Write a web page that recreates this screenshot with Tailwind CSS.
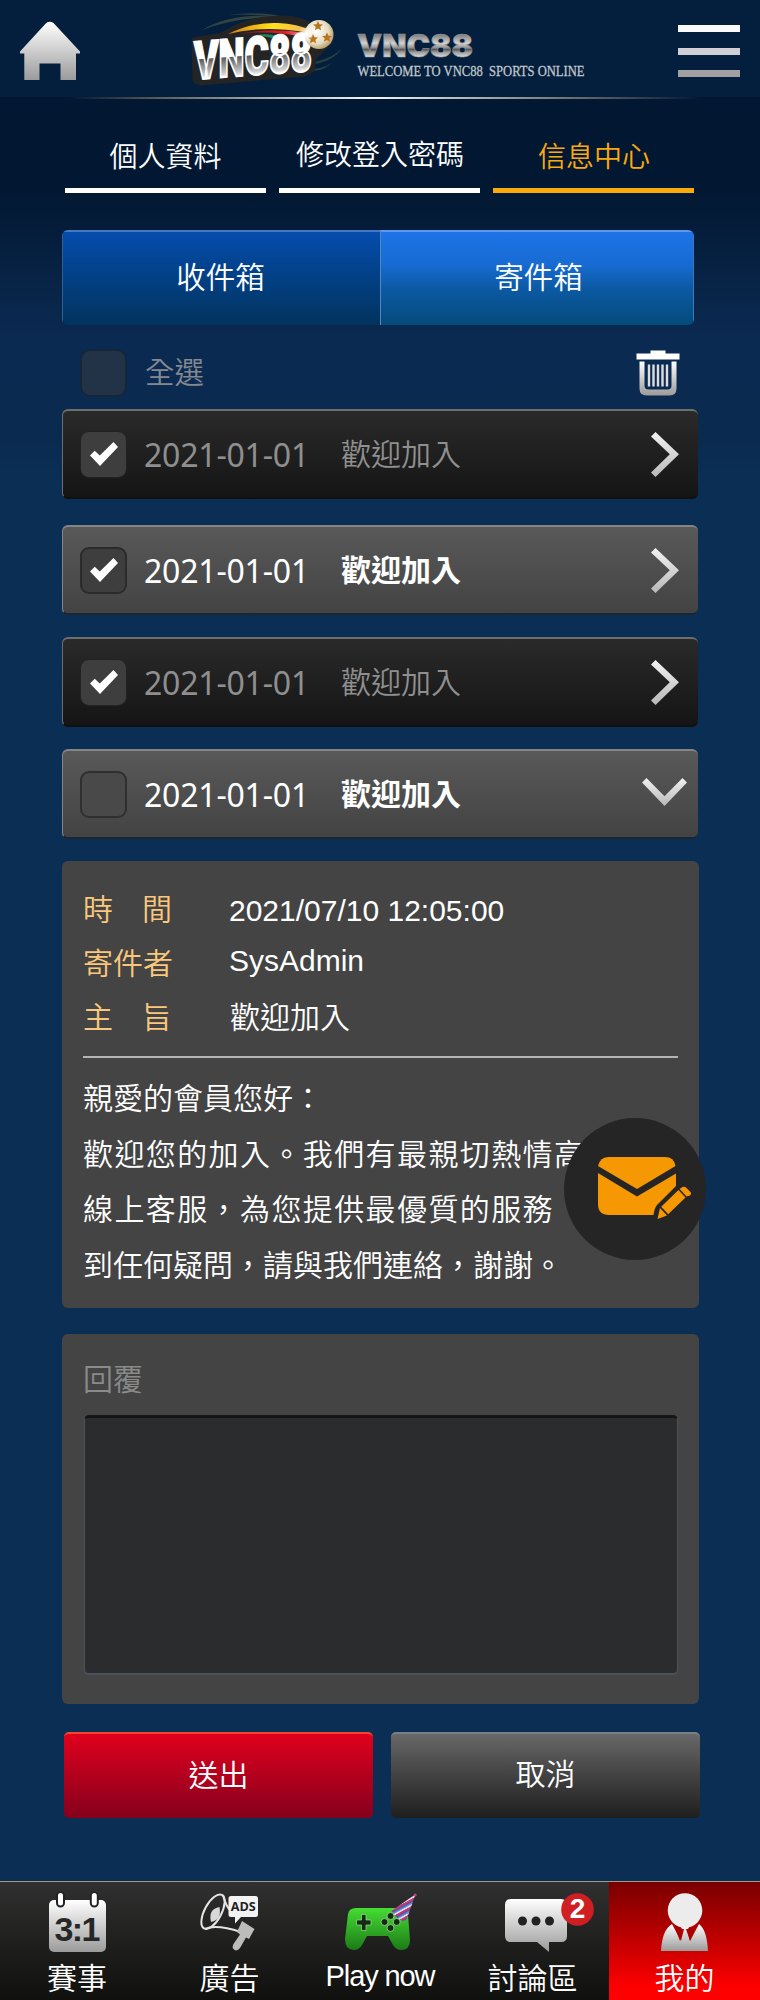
<!DOCTYPE html>
<html lang="zh-Hant">
<head>
<meta charset="utf-8">
<title>VNC88</title>
<script src="https://cdn.jsdelivr.net/npm/@tailwindcss/browser@4"></script>
</head>
<body class="bg-[#0b2c52]">
<svg class="absolute h-0 w-0" aria-hidden="true">
  <defs>
    <linearGradient id="silver" x1="0" y1="0" x2="0" y2="1"><stop offset="0" stop-color="#fff"/><stop offset="1" stop-color="#9b9b9b"/></linearGradient>
    <linearGradient id="arrow" x1="0" y1="0" x2="0" y2="1"><stop offset="0" stop-color="#f2f2f2"/><stop offset="1" stop-color="#b8b8b8"/></linearGradient>
    <linearGradient id="chrome" gradientUnits="userSpaceOnUse" x1="0" y1="41" x2="0" y2="80"><stop offset="0" stop-color="#fff"/><stop offset=".47" stop-color="#fff"/><stop offset=".49" stop-color="#5c5c5c"/><stop offset=".9" stop-color="#d0d0d0"/><stop offset="1" stop-color="#fff"/></linearGradient>
    <linearGradient id="steel" gradientUnits="userSpaceOnUse" x1="0" y1="34" x2="0" y2="57"><stop offset="0" stop-color="#777"/><stop offset=".4" stop-color="#d2d2d2"/><stop offset=".58" stop-color="#999"/><stop offset=".68" stop-color="#555"/><stop offset=".78" stop-color="#999"/><stop offset="1" stop-color="#dcdcdc"/></linearGradient>
    <linearGradient id="green" x1="0" y1="0" x2="0" y2="1"><stop offset="0" stop-color="#45dd33"/><stop offset="1" stop-color="#1c7a17"/></linearGradient>
    <linearGradient id="swoosh" x1="0" y1="0" x2="1" y2="0"><stop offset="0" stop-color="#d67a10"/><stop offset=".55" stop-color="#ffe21a"/><stop offset="1" stop-color="#f0b060"/></linearGradient>
    <linearGradient id="redsw" x1="0" y1="0" x2="1" y2="0"><stop offset="0" stop-color="#7d1218"/><stop offset=".7" stop-color="#e0202c"/><stop offset="1" stop-color="#f4a0a0"/></linearGradient>
    <radialGradient id="ball" cx=".4" cy=".4" r=".7"><stop offset="0" stop-color="#fff"/><stop offset=".6" stop-color="#e6dcc0"/><stop offset="1" stop-color="#a58a50"/></radialGradient>
    <radialGradient id="glow"><stop offset="0" stop-color="#fff"/><stop offset="1" stop-color="#fff" stop-opacity="0"/></radialGradient>
    <linearGradient id="hat" gradientUnits="userSpaceOnUse" x1="399" y1="1916" x2="402" y2="1921.500" spreadMethod="repeat"><stop offset="0" stop-color="#3b6fc0"/><stop offset=".3" stop-color="#6fa0dd"/><stop offset=".36" stop-color="#f3d9e6"/><stop offset=".52" stop-color="#f3d9e6"/><stop offset=".58" stop-color="#c2417f"/><stop offset="1" stop-color="#8e3a80"/></linearGradient>
    <symbol id="chev" viewBox="0 0 28 45"><path d="M0 4.500 4.500 0 28 22.200 4.500 45 0 40.500 18.800 22.200Z" fill="url(#arrow)"/></symbol>
    <symbol id="tick" viewBox="0 0 28 24"><path d="M0 13.500 4.700 8.800 9.800 13.400 23.500 0 28 5 10 24Z" fill="#fff"/></symbol>
    <symbol id="star" viewBox="-5 -5 10 10"><path d="M0-5 1.500-1.700 5-1.500 2.300.8 3.100 4.300 0 2.400-3.100 4.300-2.300.8-5-1.500-1.500-1.700Z" fill="#b8741c"/></symbol>
  </defs>
</svg>
<div class="relative flex h-[2000px] w-[760px] flex-col overflow-hidden bg-[linear-gradient(180deg,#021832_100px,#021832_190px,#0b2a52_340px,#0b2a4f_440px,#0b2e55_470px,#0b2e55)] font-['Liberation_Sans','Noto_Sans_CJK_TC',sans-serif] font-[350] text-white">

  <header class="flex h-[97px] shrink-0 bg-[#031f3d]">
    <svg class="ml-[19px] mt-[20px] h-[62px] w-[62px] shrink-0" viewBox="19 20 62 62"><path d="M46.200 23Q49.800 20.500 53.500 23L80 51.500V53.500H76V80H60.500V63.500H39.500V80H24.300V53.500H20V51.500Z" fill="url(#silver)"/></svg>
    <svg class="ml-[104px] mt-[5px] h-[85px] w-[165px] shrink-0 overflow-visible" viewBox="185 5 165 85">
      <path d="M202 30Q235 10 290 18Q240 15 202 30ZM228 15Q265 10 295 20Q260 13 228 15Z" fill="#31443f"/>
      <path d="M315 62Q335 57 342 48Q335 60 315 64ZM313 69Q328 68 334 60Q326 71 313 71Z" fill="#25423f"/>
      <path d="M194 40 222 35Q248 18 284 18 304 19 310 26L330 42 314 58 312 70 304 74 200 83 195 80Z" fill="#242424" stroke="#242424" stroke-width="5" stroke-linejoin="round"/>
      <path d="M228 34Q252 22 278 23 298 24 310 30L304 32Q262 25 228 34Z" fill="url(#swoosh)"/>
      <path d="M238 34Q272 27 306 33L298 36Q270 30 238 34Z" fill="url(#redsw)"/>
      <path d="M257 35Q268 33 278 36L272 38Z" fill="#188a64"/>
      <text x="194" y="79.500" transform="translate(0 14.500) skewY(-4.300)" textLength="118" lengthAdjust="spacingAndGlyphs" font-family="Roboto,'Liberation Sans',sans-serif" font-weight="900" font-size="53" fill="url(#chrome)" stroke="#fff" stroke-width="2">VNC88</text>
      <circle cx="319" cy="34.500" r="14.500" fill="url(#ball)"/>
      <use href="#star" x="313" y="21" width="10" height="10"/><use href="#star" x="308" y="34" width="10" height="10"/><use href="#star" x="322" y="32" width="10" height="11"/>
      <circle cx="306" cy="34" r="8" fill="url(#glow)"/>
    </svg>
    <svg class="ml-[7px] mt-[28px] h-[56px] w-[234px] shrink-0 overflow-visible" viewBox="357 28 234 56">
      <text x="357" y="57" textLength="116" lengthAdjust="spacingAndGlyphs" font-family="Inter,sans-serif" font-weight="900" font-size="31" fill="url(#steel)" stroke="#999" stroke-width=".6">VNC88</text>
      <text x="357.500" y="75.500" xml:space="preserve" textLength="227" lengthAdjust="spacingAndGlyphs" font-family="'Liberation Serif',serif" font-weight="400" font-size="15.500" fill="#c4c8cc" stroke="#c4c8cc" stroke-width=".3">WELCOME TO VNC88  SPORTS ONLINE</text>
    </svg>
    <div class="ml-[87px] mt-[25px] flex w-[62px] flex-col gap-[15.500px]">
      <i class="h-[7px] bg-[#fafafa]"></i><i class="h-[7px] bg-[#cfcfd5]"></i><i class="h-[7px] bg-[#a0a0a2]"></i>
    </div>
  </header>
  <div class="h-[2px] shrink-0 bg-[linear-gradient(90deg,transparent_70px,#555_150px,#f5f5f5_370px,#777_560px,transparent_700px)]"></div>

  <nav class="ml-[65px] mt-[41px] flex h-[53px] w-[629px] shrink-0 justify-between text-center text-[28px] leading-[28px]">
    <a class="w-[201px] border-b-[5px] border-white pt-[4px]">個人資料</a>
    <a class="w-[201px] border-b-[5px] border-white pt-[2px] pl-[1px]">修改登入密碼</a>
    <a class="w-[201px] border-b-[5px] border-[#fca90b] pt-[4px] pl-[1px] text-[#fca90b]">信息中心</a>
  </nav>

  <div class="ml-[62px] mt-[37px] flex h-[95px] w-[632px] shrink-0 overflow-hidden rounded-[6px] text-[29.500px] leading-none">
    <div class="flex w-[318px] items-center justify-center border-l border-t-2 border-l-[#2f5f9a] border-t-[#4678c4] bg-linear-to-b from-[#054cad] to-[#02335e] pb-[2px] pr-[2px]">收件箱</div>
    <div class="flex flex-1 items-center justify-center border-x border-t-2 border-l-[#5586bb] border-r-[#3c78b8] border-t-[#5c97ec] bg-[linear-gradient(180deg,#1e74e8,#176bd2_35%,#0c5aa5_60%,#044a7b)] pb-[2px] pl-[3px]">寄件箱</div>
  </div>

  <div class="ml-[80px] mt-[24px] flex h-[48px] w-[600px] shrink-0 items-center">
    <div class="h-[48px] w-[47px] rounded-[10px] border-2 border-[#15263b] bg-[#223348]"></div>
    <div class="ml-[18px] text-[29.500px] leading-none text-[#84898f]">全選</div>
    <svg class="mb-[1px] ml-auto h-[46px] w-[44px]" viewBox="635.500 350.500 44 46"><path d="M636 354H650V351H665V354H679V360H636Z" fill="#fff"/><path d="M639 362H644V386Q644 390 648 390H667Q671 390 671 386V362H676V389Q676 396 669 396H646Q639 396 639 389Z" fill="url(#silver)"/><path d="M648.500 365V387M653 365V387M657.500 365V387M662 365V387M666.500 365V387" stroke="#ddd" stroke-width="2.400"/></svg>
  </div>

  <div class="ml-[62px] mt-[12px] flex w-[636px] shrink-0 flex-col">
    <div class="flex h-[90px] items-center rounded-[6px] border-b-2 border-l border-t-2 border-b-[#101010] border-l-[#6e6e6e] border-t-[#6e6e6e] bg-linear-to-b from-[#2a2a2a] to-[#151515] pl-[17px] text-[#8f8f8f]">
      <div class="flex size-[47px] items-center justify-center rounded-[9px] border border-[#222] bg-[#3e3e3e]"><svg class="h-[24px] w-[28px]"><use href="#tick"/></svg></div>
      <div class="ml-[17px] w-[197px] whitespace-nowrap pt-[1px] font-['Noto_Sans'] text-[32px] font-normal leading-none tracking-[-0.200px]">2021-01-01</div>
      <div class="pt-[1px] text-[30px] leading-none">歡迎加入</div>
      <svg class="ml-auto mr-[19px] h-[45px] w-[28px]"><use href="#chev"/></svg>
    </div>
    <div class="mt-[26px] flex h-[90px] items-center rounded-[6px] border-b-2 border-l border-t-2 border-b-[#1c2630] border-l-[#858585] border-t-[#858585] bg-linear-to-b from-[#595959] to-[#434343] pl-[17px]">
      <div class="flex size-[47px] items-center justify-center rounded-[9px] border-2 border-[#2b2b2b] bg-[#3e3e3e]"><svg class="h-[24px] w-[28px]"><use href="#tick"/></svg></div>
      <div class="ml-[17px] w-[197px] whitespace-nowrap pt-[1px] font-['Noto_Sans'] text-[32px] font-normal leading-none tracking-[-0.200px]">2021-01-01</div>
      <div class="pt-[1px] text-[30px] font-bold leading-none">歡迎加入</div>
      <svg class="ml-auto mr-[19px] h-[45px] w-[28px]"><use href="#chev"/></svg>
    </div>
    <div class="mt-[22px] flex h-[90px] items-center rounded-[6px] border-b-2 border-l border-t-2 border-b-[#101010] border-l-[#6e6e6e] border-t-[#6e6e6e] bg-linear-to-b from-[#2a2a2a] to-[#151515] pl-[17px] text-[#8f8f8f]">
      <div class="flex size-[47px] items-center justify-center rounded-[9px] border border-[#222] bg-[#3e3e3e]"><svg class="h-[24px] w-[28px]"><use href="#tick"/></svg></div>
      <div class="ml-[17px] w-[197px] whitespace-nowrap pt-[1px] font-['Noto_Sans'] text-[32px] font-normal leading-none tracking-[-0.200px]">2021-01-01</div>
      <div class="pt-[1px] text-[30px] leading-none">歡迎加入</div>
      <svg class="ml-auto mr-[19px] h-[45px] w-[28px]"><use href="#chev"/></svg>
    </div>
    <div class="mt-[22px] flex h-[90px] items-center rounded-[6px] border-b-2 border-l border-t-2 border-b-[#1c2630] border-l-[#858585] border-t-[#858585] bg-linear-to-b from-[#595959] to-[#434343] pl-[17px]">
      <div class="size-[47px] rounded-[9px] border-2 border-[#2f2f2f] bg-[#494949]"></div>
      <div class="ml-[17px] w-[197px] whitespace-nowrap pt-[1px] font-['Noto_Sans'] text-[32px] font-normal leading-none tracking-[-0.200px]">2021-01-01</div>
      <div class="pt-[1px] text-[30px] font-bold leading-none">歡迎加入</div>
      <svg class="mb-[4px] ml-auto mr-[11px] h-[28px] w-[45px]" viewBox="0 0 45 28"><path d="M0 4.500 4.500 0 22.500 18.300 40.500 0 45 4.500 22.500 28Z" fill="url(#arrow)"/></svg>
    </div>
  </div>

  <section class="relative ml-[62px] mt-[22px] h-[447px] w-[637px] shrink-0 rounded-[6px] bg-[#444] px-[21px] pt-[24px] text-[30px]">
    <div class="grid grid-cols-[147px_1fr] grid-rows-[54px_54px_54px] leading-[50px]">
      <div class="flex w-[89px] justify-between text-[#fac87c]"><span>時</span><span>間</span></div><div class="-ml-[1px] pt-[1px] font-normal">2021/07/10 12:05:00</div>
      <div class="text-[#fac87c]">寄件者</div><div class="-ml-[1px] -mt-[3px] font-normal">SysAdmin</div>
      <div class="flex w-[89px] justify-between text-[#fac87c]"><span>主</span><span>旨</span></div><div>歡迎加入</div>
    </div>
    <div class="mt-[9px] h-[2px] w-[595px] bg-[#b4b4b4]"></div>
    <div class="mt-[13px] whitespace-nowrap leading-[55.500px]">
      <p>親愛的會員您好：</p>
      <p class="tracking-[1.400px]">歡迎您的加入。我們有最親切熱情高</p>
      <p class="tracking-[1.400px]">線上客服，為您提供最優質的服務</p>
      <p>到任何疑問，請與我們連絡，謝謝。</p>
    </div>
    <div class="absolute left-[502px] top-[257px] size-[142px] rounded-full bg-[#252525]">
      <svg class="size-[142px]" viewBox="564 1118 142 142"><g fill="#f59802"><path d="M598 1166Q600 1157 609 1157H665Q674 1157 675.500 1166L637 1189Z"/><path d="M598 1173 637 1196.500 676 1173.500V1186L657 1205Q654.500 1208 653.500 1215H609Q598 1215 598 1204Z"/><path d="M657.500 1219 660 1208 667 1215.500ZM661.200 1206.800 678.500 1190 685.500 1197.500 668.200 1214.300ZM679.600 1189 682.500 1187Q684.500 1186 686.500 1188L690 1191.500Q692 1193.500 690 1195.500L686.600 1196.500Z"/></g></svg>
    </div>
  </section>

  <section class="ml-[62px] mt-[26px] h-[370px] w-[637px] shrink-0 rounded-[6px] bg-[#444] px-[22px] pt-[22px]">
    <div class="-ml-[1px] text-[30px] leading-[48px] text-[#8a8a8a]">回覆</div>
    <div class="mt-[11px] h-[260px] w-[594px] rounded-[5px] border border-b-2 border-t-[3px] border-[#4b525a] border-t-[#151515] bg-[#2b2c2d]"></div>
  </section>

  <div class="ml-[64px] mt-[28px] flex h-[86px] w-[636px] shrink-0 justify-between text-[30px] leading-none">
    <button class="w-[309px] rounded-[5px] border-t-2 border-[#fb4034] bg-linear-to-b from-[#e0001b] to-[#86001c]">送出</button>
    <button class="w-[309px] rounded-[5px] border-t-2 border-[#7c8084] bg-linear-to-b from-[#686868] to-[#1f1f1f] pb-[2px]">取消</button>
  </div>

  <footer class="mt-[63px] grid h-[119px] shrink-0 grid-cols-[152px_152px_152px_153px_151px] border-t border-[#a09a84] bg-linear-to-b from-[#303030] to-[#10100e] text-center text-[30px] leading-[40px]">
    <div class="pt-[6px]">
      <svg class="h-[71px] w-[152px]" viewBox="0 1888 152 71"><rect x="49" y="1900" width="57" height="52" rx="5" fill="url(#silver)"/><g stroke-linecap="round"><path d="M60.500 1896V1903M94.300 1896V1903" stroke="#222" stroke-width="9"/><path d="M60.500 1895.500V1903M94.300 1895.500V1903" stroke="#fff" stroke-width="5"/></g><text x="77.500" y="1940.500" text-anchor="middle" textLength="46" font-weight="700" font-size="34" fill="#262626">3:1</text></svg>
      <div class="pl-[2px]">賽事</div>
    </div>
    <div class="pt-[6px]">
      <svg class="h-[71px] w-[152px]" viewBox="152 1888 152 71"><g fill="none" stroke="#e4e4e4" stroke-width="2"><ellipse cx="213" cy="1911.700" rx="8.500" ry="19" transform="rotate(28 213 1911.700)"/><path d="M205 1929Q216 1924 241 1932M223 1895Q226 1907 231 1911"/></g><path d="M219.500 1907Q208 1909 211 1922 222 1920 219.500 1907Z" fill="#d8d8d8"/><path d="M231 1896H255.500Q258 1896 258 1898.500V1914.500Q258 1917 255.500 1917H241L235 1923.500V1917H231Q228.500 1917 228.500 1914.500V1898.500Q228.500 1896 231 1896Z" fill="#f3f3f3"/><text x="243.300" y="1911" text-anchor="middle" textLength="25" lengthAdjust="spacingAndGlyphs" font-family="'Open Sans',sans-serif" font-weight="700" font-size="13" fill="#222">ADS</text><path d="M242 1921 254.500 1929 249 1939 246 1937.500 240 1948Q237 1952 234 1949.500 231.500 1948 233.500 1944L240 1934.500 237 1932Z" fill="#bcbcbc"/></svg>
      <div class="pl-[3px]">廣告</div>
    </div>
    <div class="pt-[6px]">
      <svg class="h-[71px] w-[152px]" viewBox="304 1888 152 71"><path d="M356 1908H400Q407 1908 408 1915L410 1940Q410 1950 401 1950 396 1950 393 1945L388 1936H367L362 1945Q359 1950 354 1950 345 1950 345 1939L348 1914Q349 1908 356 1908Z" fill="url(#green)"/><path d="M361.500 1914.500H366V1920H371V1925H366V1930.500H361.500V1925H356.500V1920H361.500Z" fill="#162b14" stroke="#9be38f" stroke-width=".7"/><g fill="#162b14" stroke="#9be38f" stroke-width=".8"><circle cx="390.500" cy="1916" r="3.500"/><circle cx="390.500" cy="1928" r="3.500"/><circle cx="384.500" cy="1922" r="3.500"/><circle cx="396.700" cy="1922" r="3.500"/></g><path d="M415.700 1894 406 1921Q397 1921 391.500 1911Z" fill="url(#hat)"/><circle cx="415.200" cy="1895" r="1.500" fill="#c8417f"/></svg>
      <div class="-mt-[3px] text-[29px] font-normal tracking-[-1.100px]">Play now</div>
    </div>
    <div class="pt-[6px]">
      <svg class="h-[71px] w-[153px]" viewBox="456 1888 153 71"><path d="M511 1899H561Q567 1899 567 1905V1936Q567 1942 561 1942H549V1952L537 1942H511Q505 1942 505 1936V1905Q505 1899 511 1899Z" fill="url(#silver)"/><g fill="#222"><circle cx="522.500" cy="1921" r="4.500"/><circle cx="536" cy="1921" r="4.500"/><circle cx="549.500" cy="1921" r="4.500"/></g><circle cx="577.500" cy="1909.500" r="16.300" fill="#cf1f22"/><text x="577.500" y="1918" text-anchor="middle" font-size="28" font-weight="700" fill="#fff">2</text></svg>
      <div>討論區</div>
    </div>
    <div class="bg-linear-to-b from-[#7a0000] to-[#ff0000] to-90% pt-[6px]">
      <svg class="h-[71px] w-[151px]" viewBox="609 1888 151 71"><path d="M672 1924 681 1941 684 1929H682L681 1927H689L688 1929H686L690 1941 699 1924Q707 1930 708 1951H661Q662 1930 672 1924Z" fill="url(#silver)"/><path d="M674 1925 682.500 1930 680 1941ZM696 1925 687.500 1930 690 1941Z" fill="#a80000"/><circle cx="685" cy="1910.500" r="17.300" fill="#ececec"/></svg>
      <div>我的</div>
    </div>
  </footer>
</div>
</body>
</html>
